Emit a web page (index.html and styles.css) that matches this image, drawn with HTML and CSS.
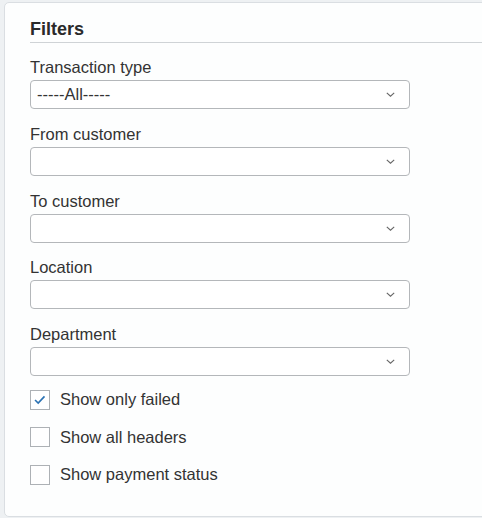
FILE: index.html
```html
<!DOCTYPE html>
<html>
<head>
<meta charset="utf-8">
<link rel="stylesheet" href="styles.css">
</head>
<body>
<div class="page">
  <div class="card">
    <h2 class="title">Filters</h2>
    <div class="field">
      <label class="label">Transaction type</label>
      <div class="select"><span class="value">-----All-----</span><svg class="chev" viewBox="0 0 9 5" width="9" height="5"><path d="M0.8 0.8 L4.5 4.2 L8.2 0.8" fill="none" stroke="#666" stroke-width="1.1"/></svg></div>
    </div>
    <div class="field">
      <label class="label">From customer</label>
      <div class="select"><span class="value"></span><svg class="chev" viewBox="0 0 9 5" width="9" height="5"><path d="M0.8 0.8 L4.5 4.2 L8.2 0.8" fill="none" stroke="#666" stroke-width="1.1"/></svg></div>
    </div>
    <div class="field">
      <label class="label">To customer</label>
      <div class="select"><span class="value"></span><svg class="chev" viewBox="0 0 9 5" width="9" height="5"><path d="M0.8 0.8 L4.5 4.2 L8.2 0.8" fill="none" stroke="#666" stroke-width="1.1"/></svg></div>
    </div>
    <div class="field">
      <label class="label">Location</label>
      <div class="select"><span class="value"></span><svg class="chev" viewBox="0 0 9 5" width="9" height="5"><path d="M0.8 0.8 L4.5 4.2 L8.2 0.8" fill="none" stroke="#666" stroke-width="1.1"/></svg></div>
    </div>
    <div class="field">
      <label class="label">Department</label>
      <div class="select"><span class="value"></span><svg class="chev" viewBox="0 0 9 5" width="9" height="5"><path d="M0.8 0.8 L4.5 4.2 L8.2 0.8" fill="none" stroke="#666" stroke-width="1.1"/></svg></div>
    </div>
    <div class="checks">
      <div class="check"><span class="box checked"><svg viewBox="0 0 20 20" width="18" height="18"><path d="M4.5 10 L8 13.5 L15 6" fill="none" stroke="#2b72b3" stroke-width="1.8"/></svg></span><span class="ctext">Show only failed</span></div>
      <div class="check"><span class="box"></span><span class="ctext">Show all headers</span></div>
      <div class="check"><span class="box"></span><span class="ctext">Show payment status</span></div>
    </div>
  </div>
</div>
</body>
</html>
```

FILE: styles.css
```css
html, body {
  margin: 0;
  padding: 0;
  background: #eef1f3;
  overflow: hidden;
}
body {
  font-family: "Liberation Sans", Arial, sans-serif;
  color: #333;
}
.page {
  padding: 2px 0 0 4px;
}
.card {
  background: #fdfefe;
  border: 1px solid #dadee2;
  border-radius: 5px;
  margin-right: -12px;
  padding: 14px 0 28px 25px;
  height: 471px;
}
.title {
  margin: 0;
  font-size: 18px;
  font-weight: bold;
  color: #2a2a2a;
  line-height: 24px;
  padding-bottom: 1px;
  border-bottom: 1px solid #cfd3d6;
  margin-bottom: 14px;
}
.field {
  display: flex;
  flex-direction: column;
  margin-bottom: 14.75px;
}
.label {
  font-size: 16.5px;
  line-height: 20px;
  color: #333;
  margin-bottom: 3px;
}
.select {
  width: 380px;
  height: 29px;
  box-sizing: border-box;
  border: 1px solid #b4b7ba;
  border-radius: 4px;
  background: #fff;
  display: flex;
  align-items: center;
  justify-content: space-between;
  padding: 0 14px 0 6px;
}
.value {
  font-size: 16.5px;
  color: #333;
}
.chev {
  display: block;
}
.checks {
  display: flex;
  flex-direction: column;
  gap: 17.5px;
  margin-top: -1px;
}
.check {
  display: flex;
  align-items: center;
  gap: 10px;
  height: 20px;
}
.box {
  width: 20px;
  height: 20px;
  box-sizing: border-box;
  border: 1px solid #adb1b5;
  background: #fff;
  display: flex;
  align-items: center;
  justify-content: center;
}
.box svg {
  display: block;
}
.ctext {
  font-size: 16.5px;
  color: #333;
}
```
